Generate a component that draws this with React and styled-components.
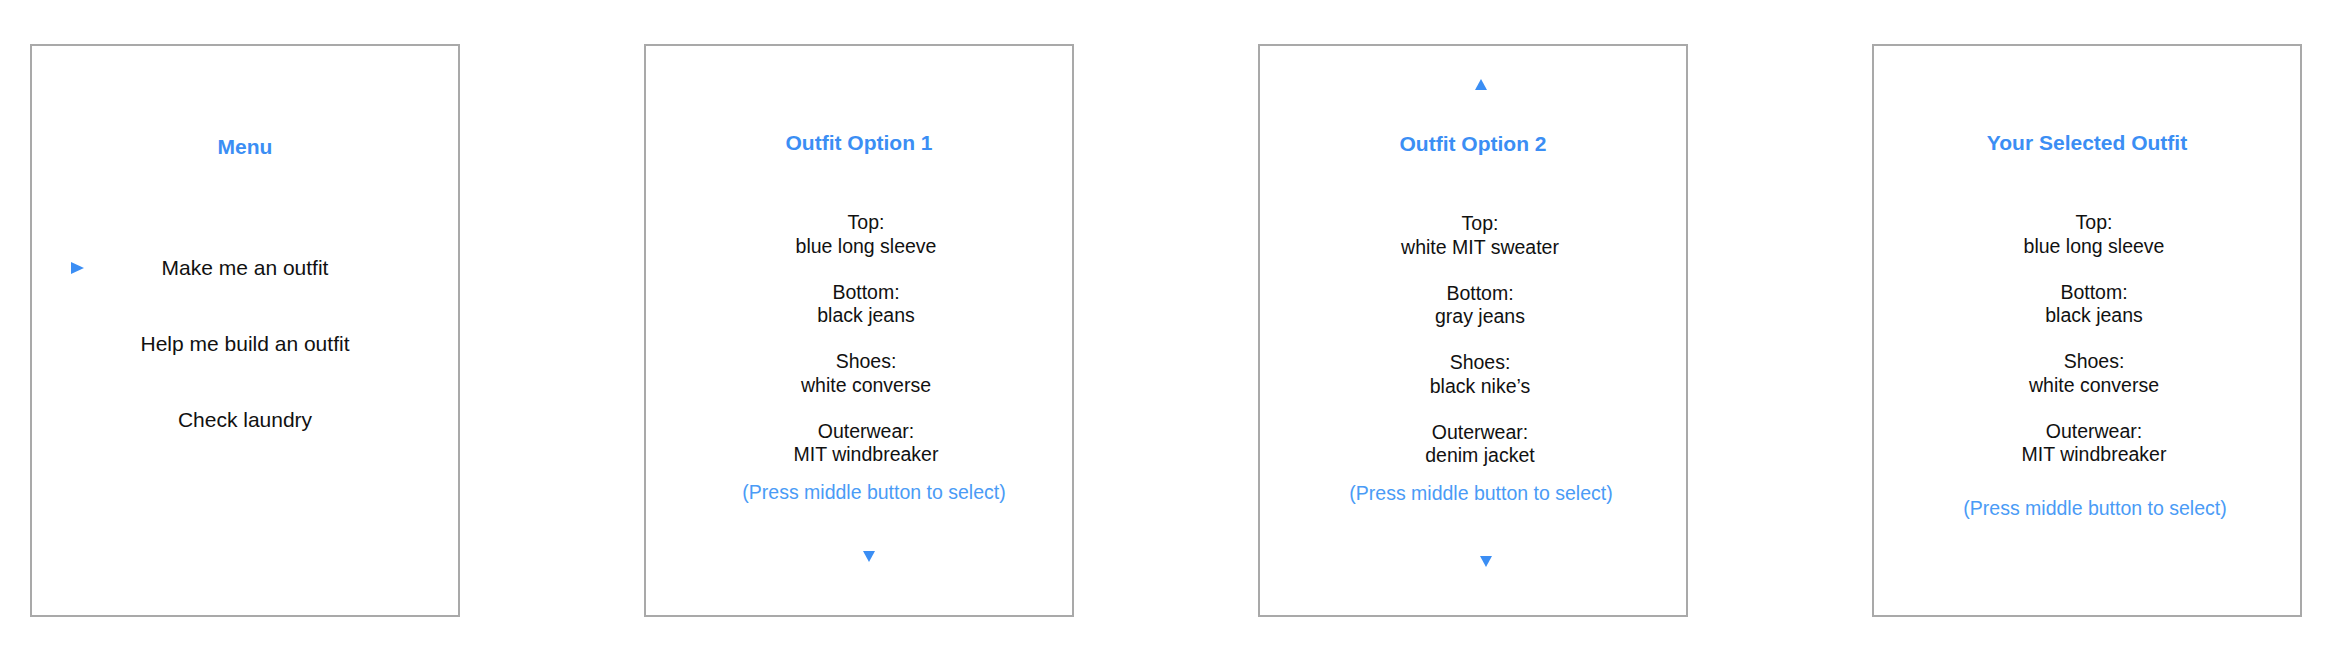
import React from "react";
import styled, { createGlobalStyle } from "styled-components";

const GlobalStyle = createGlobalStyle`
  body {
    margin: 0;
    background: #ffffff;
    font-family: "Liberation Sans", Arial, Helvetica, sans-serif;
  }
`;

const outfits = [
  {
    title: "Outfit Option 1",
    items: [
      ["Top:", "blue long sleeve"],
      ["Bottom:", "black jeans"],
      ["Shoes:", "white converse"],
      ["Outerwear:", "MIT windbreaker"],
    ],
  },
  {
    title: "Outfit Option 2",
    items: [
      ["Top:", "white MIT sweater"],
      ["Bottom:", "gray jeans"],
      ["Shoes:", "black nike’s"],
      ["Outerwear:", "denim jacket"],
    ],
  },
];

function Triangle({ dir }) {
  const points = {
    up: "6,0 12,11 0,11",
    down: "0,0 12,0 6,11",
    right: "0,0 13,6 0,12",
  }[dir];
  const w = dir === "right" ? 13 : 12;
  const h = dir === "right" ? 12 : 11;
  return (
    <svg width={w} height={h} viewBox={`0 0 ${w} ${h}`}>
      <polygon points={points} fill="#3b8ef4" />
    </svg>
  );
}

function App() {
  return (
    <Screens>
      <GlobalStyle />

      <Panel>
        <UpSlot />
        <Title $top={40}>Menu</Title>
        <MenuList>
          <MenuRow>
            <Marker>
              <Triangle dir="right" />
            </Marker>
            <span>Make me an outfit</span>
          </MenuRow>
          <MenuRow>
            <Marker />
            <span>Help me build an outfit</span>
          </MenuRow>
          <MenuRow>
            <Marker />
            <span>Check laundry</span>
          </MenuRow>
        </MenuList>
      </Panel>

      <Panel>
        <UpSlot />
        <Title>{outfits[0].title}</Title>
        <Outfit items={outfits[0].items} />
        <Hint $gap={14} $shift={15}>(Press middle button to select)</Hint>
        <ArrowRow $gap={47} $shift={10}>
          <Triangle dir="down" />
        </ArrowRow>
      </Panel>

      <Panel>
        <UpSlot $shift={8}>
          <Triangle dir="up" />
        </UpSlot>
        <Title $top={37}>{outfits[1].title}</Title>
        <Outfit items={outfits[1].items} />
        <Hint $gap={14} $shift={8}>(Press middle button to select)</Hint>
        <ArrowRow $gap={51} $shift={13}>
          <Triangle dir="down" />
        </ArrowRow>
      </Panel>

      <Panel>
        <UpSlot />
        <Title>Your Selected Outfit</Title>
        <Outfit items={outfits[0].items} />
        <Hint $gap={30} $shift={8}>(Press middle button to select)</Hint>
      </Panel>
    </Screens>
  );
}

function Outfit({ items }) {
  return (
    <ItemList>
      {items.map(([label, value]) => (
        <Item key={label}>
          <div>{label}</div>
          <div>{value}</div>
        </Item>
      ))}
    </ItemList>
  );
}

const Screens = styled.main`
  display: flex;
  gap: 184px;
  padding: 44px 0 0 30px;
`;

const Panel = styled.section`
  box-sizing: border-box;
  flex: none;
  width: 430px;
  height: 573px;
  border: 2px solid #a9a9a9;
  padding-top: 28px;
  display: flex;
  flex-direction: column;
  align-items: center;
`;

const UpSlot = styled.div`
  height: 20px;
  display: flex;
  align-items: center;
  justify-content: center;
  padding-left: ${(p) => (p.$shift || 0) * 2}px;
`;

const Title = styled.h2`
  margin: ${(p) => (p.$top ?? 36)}px 0 0;
  font-size: 21px;
  line-height: 26px;
  font-weight: 700;
  color: #3b8ef4;
`;

const MenuList = styled.div`
  width: 100%;
  margin-top: 95px;
  display: flex;
  flex-direction: column;
  gap: 50px;
`;

const MenuRow = styled.div`
  display: grid;
  grid-template-columns: 1fr auto 1fr;
  align-items: center;
  font-size: 21px;
  line-height: 26px;
  color: #111111;
`;

const Marker = styled.div`
  display: flex;
  align-items: center;
  padding-left: 39px;
`;

const ItemList = styled.div`
  margin-top: 55px;
  padding-left: 14px;
  display: flex;
  flex-direction: column;
  gap: 22.5px;
  text-align: center;
`;

const Item = styled.div`
  font-size: 19.5px;
  line-height: 23.5px;
  color: #111111;
`;

const Hint = styled.p`
  margin: ${(p) => p.$gap}px 0 0;
  padding-left: ${(p) => p.$shift * 2}px;
  font-size: 19.5px;
  line-height: 23.5px;
  color: #4a9bf6;
`;

const ArrowRow = styled.div`
  margin-top: ${(p) => p.$gap}px;
  padding-left: ${(p) => p.$shift * 2}px;
  height: 11px;
  display: flex;
`;

export default App;
